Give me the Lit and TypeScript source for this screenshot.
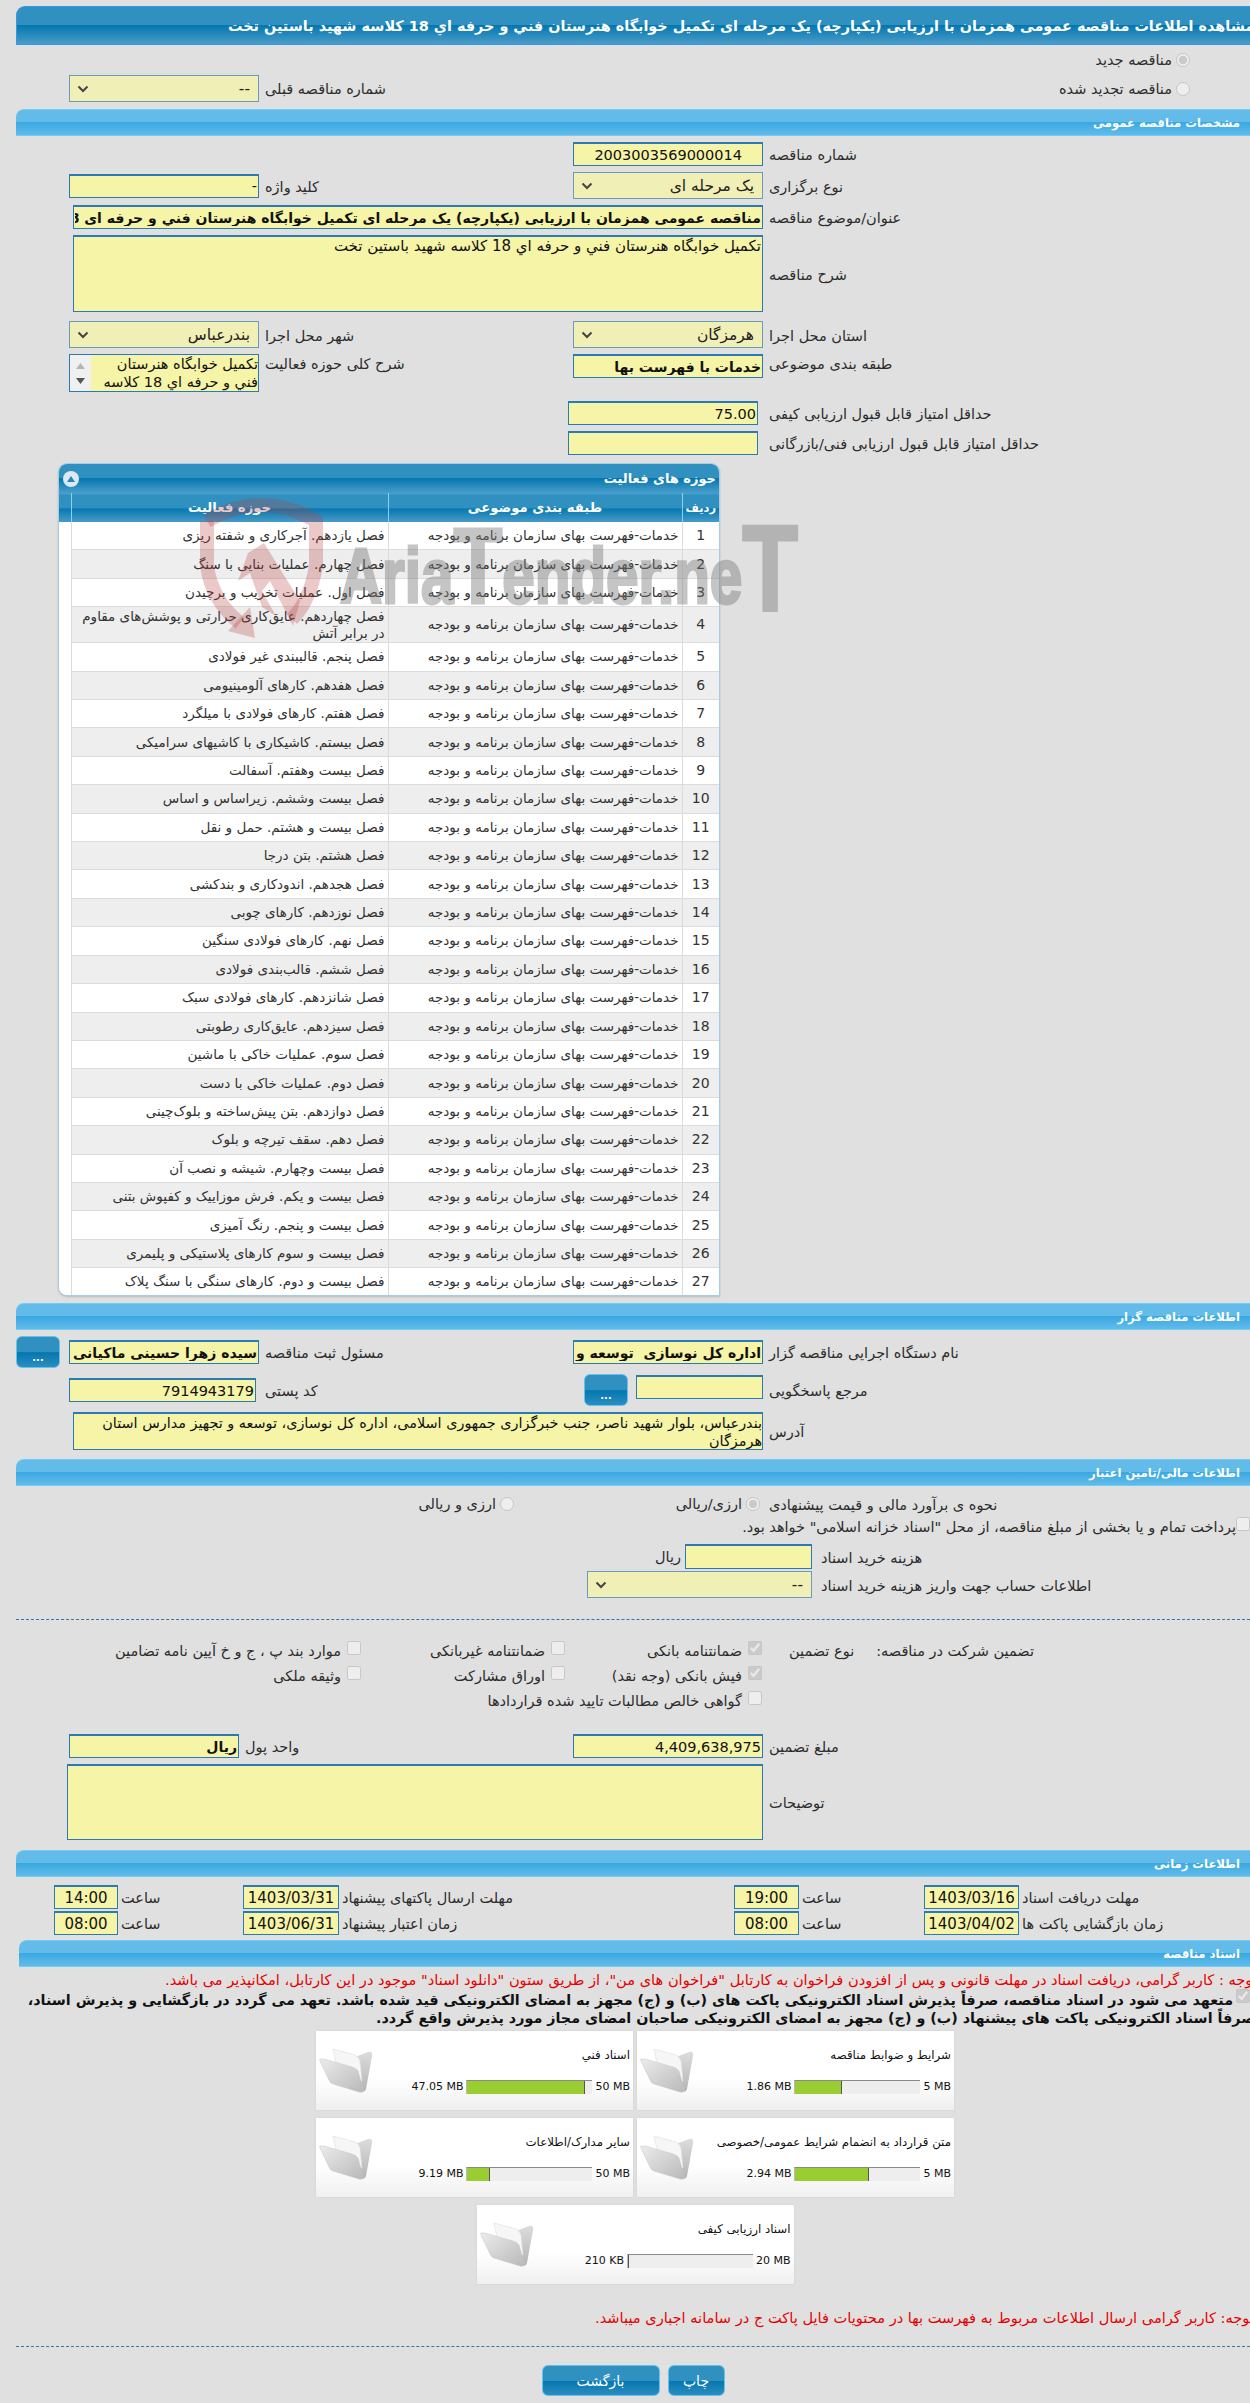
import { LitElement, html, css, svg } from "lit";
import { customElement } from "lit/decorators.js";

const B = "خدمات-فهرست بهای سازمان برنامه و بودجه";
const ROWS = [
  "فصل یازدهم. آجرکاری و شفته ریزی",
  "فصل چهارم. عملیات بنایی با سنگ",
  "فصل اول. عملیات تخریب و برچیدن",
  "فصل چهاردهم. عایق‌کاری حرارتی و پوشش‌های مقاوم در برابر آتش",
  "فصل پنجم. قالببندی غیر فولادی",
  "فصل هفدهم. کارهای آلومینیومی",
  "فصل هفتم. کارهای فولادی با میلگرد",
  "فصل بیستم. کاشیکاری با کاشیهای سرامیکی",
  "فصل بیست وهفتم. آسفالت",
  "فصل بیست وششم. زیراساس و اساس",
  "فصل بیست و هشتم. حمل و نقل",
  "فصل هشتم. بتن درجا",
  "فصل هجدهم. اندودکاری و بندکشی",
  "فصل نوزدهم. کارهای چوبی",
  "فصل نهم. کارهای فولادی سنگین",
  "فصل ششم. قالب‌بندی فولادی",
  "فصل شانزدهم. کارهای فولادی سبک",
  "فصل سیزدهم. عایق‌کاری رطوبتی",
  "فصل سوم. عملیات خاکی با ماشین",
  "فصل دوم. عملیات خاکی با دست",
  "فصل دوازدهم. بتن پیش‌ساخته و بلوک‌چینی",
  "فصل دهم. سقف تیرچه و بلوک",
  "فصل بیست وچهارم. شیشه و نصب آن",
  "فصل بیست و یکم. فرش موزاییک و کفپوش بتنی",
  "فصل بیست و پنجم. رنگ آمیزی",
  "فصل بیست و سوم کارهای پلاستیکی و پلیمری",
  "فصل بیست و دوم. کارهای سنگی با سنگ پلاک",
];

const CARDS = [
  { t: "شرایط و ضوابط مناقصه", used: "1.86 MB", max: "5 MB", pct: 37 },
  { t: "اسناد فني", used: "47.05 MB", max: "50 MB", pct: 94 },
  { t: "متن قرارداد به انضمام شرایط عمومی/خصوصی", used: "2.94 MB", max: "5 MB", pct: 59 },
  { t: "سایر مدارک/اطلاعات", used: "9.19 MB", max: "50 MB", pct: 18.4 },
  { t: "اسناد ارزیابی کیفی", used: "210 KB", max: "20 MB", pct: 1 },
];

const folder = svg`<svg class="folder" viewBox="0 0 54 47" width="54" height="47">
  <defs>
    <linearGradient id="fg" x1="0" y1="0" x2="1" y2="1"><stop offset="0" stop-color="#ececec"/><stop offset="1" stop-color="#b9b9b9"/></linearGradient>
    <linearGradient id="bg" x1="0" y1="0" x2="0" y2="1"><stop offset="0" stop-color="#dcdcdc"/><stop offset="1" stop-color="#b4b4b4"/></linearGradient>
  </defs>
  <path d="M36 10 L49 5 Q54 4 53 9 L47 42 Q46 46 42 44 Z" fill="url(#bg)"/>
  <path d="M14 2 L36 8 Q40 10 41 14 L43 34 L20 30 Z" fill="#f6f6f6" stroke="#dedede" stroke-width=".6"/>
  <path d="M2 12 Q0 11 1 14 L10 33 Q11 36 14 37 L40 45 Q45 46 44 42 L39 24 Q37 21 33 20 L5 12 Z" fill="url(#fg)" stroke="#c4c4c4" stroke-width=".5"/>
</svg>`;

const chevron = html`<svg class="chev" viewBox="0 0 12 8" width="12" height="8"><path d="M1.5 1.5 L6 6 L10.5 1.5" fill="none" stroke="#444" stroke-width="2"/></svg>`;

@customElement("app-root")
export class AppRoot extends LitElement {
  static styles = css`
    :host { display: block; width: 1250px; background: #e0e0e0; font-family: "DejaVu Sans", sans-serif; font-size: 14.5px; color: #2c2c2c; }
    * { box-sizing: border-box; }
    .page { width: 1250px; height: 2403px; overflow: hidden; padding: 6px 0 0 16px; direction: rtl; background: #e0e0e0; }

    .title { height: 39px; direction: ltr; display: flex; align-items: center; padding-left: 211px; overflow: hidden; color: #fff; font-weight: bold; font-size: 14.4px;
      border-top: 1px solid #3399e5; border-left: 1px solid #3399e5; border-bottom: 1px solid #3399e5; border-top-left-radius: 9px;
      background: linear-gradient(#3090bf 0, #3090bf 48%, #0477b0 50%, #4a9cc8 100%); }
    .title span { direction: rtl; white-space: nowrap; flex: none; }

    .sec { height: 27px; display: flex; align-items: center; padding-right: 10px; color: #fff; font-weight: bold; font-size: 11.6px;
      border-top: 1px solid #6dcdf7; border-bottom: 1px solid #6dcdf7; border-top-left-radius: 8px;
      background: linear-gradient(#62bbe9 0, #62bbe9 48%, #3aa9e2 50%, #62bbe9 100%); }
    .sec.docs { margin-left: 3px; }

    .row { display: grid; grid-template-columns: 487px 190px 314px 190px 53px; align-items: center; }
    .lbl { text-align: left; padding: 2px 0 0 6px; white-space: nowrap; direction: ltr; }
    .lbl > span { direction: rtl; unicode-bidi: isolate; }
    .lbl.top { align-self: start; }
    .lbl.pull { margin-left: -20px; }
    .topAlign { align-self: start; }

    input.tx, textarea.tx { display: block; width: 100%; height: 24px; margin: 0; padding: 0 1px; border: 1px solid #2a7ab4; border-top-width: 2px; border-radius: 0; background: #f6f4a6; color: #111; font: 14.5px "DejaVu Sans", sans-serif; direction: rtl; text-align: right; outline: none; }
    textarea.tx { font-size: 15px; resize: none; line-height: 18px; overflow: hidden; }
    input.tx.b { font-weight: bold; font-size: 14px; }
    input.tx.pad { padding-right: 20px; }
    .sel { display: flex; align-items: center; justify-content: space-between; height: 27px; width: 100%; padding: 0 8px 0 7px; background: #f0efb6; border: 1px solid #6a9bb8; font-size: 15.5px; color: #222; }
    .chev { flex: none; }
    .list { display: flex; height: 38px; border: 1px solid #2a7ab4; background: #f6f4a6; overflow: hidden; }
    .list .txt { flex: 1; font-size: 14.5px; line-height: 18px; color: #111; overflow: hidden; }
    .sb { flex: none; width: 21px; background: #f0f0f0; display: flex; flex-direction: column; align-items: center; justify-content: space-around; padding: 3px 0; }
    input.tx.w690, textarea.tx.w690 { grid-column: 2 / span 3; width: 690px; }
    textarea.tx.h77 { height: 77px; }
    textarea.tx.h38t { height: 38px; font-size: 14.4px; padding: 0; }
    .m3 { margin-top: 3px; } .m6 { margin-top: 6px; } .m7 { margin-top: 7px; } .m9 { margin-top: 9px; }
    input.tx.shift5 { margin-right: 5px; width: 190px; }

    .radioRow { padding-right: 60px; margin-top: 5px; height: 20px; display: flex; align-items: center; }
    .rad { display: inline-flex; align-items: center; gap: 4px; white-space: nowrap; }
    input[type=radio], input[type=checkbox] { margin: 0; width: 14px; height: 14px; flex: none; }
    .prev { display: grid; grid-template-columns: 991px 190px; align-items: center; height: 27px; margin-top: 5px; }
    .prevL { display: flex; justify-content: space-between; align-items: center; padding-right: 60px; padding-left: 6px; white-space: nowrap; }

    .panel { position: relative; width: 662px; margin: 8px 530px 0 0; height: 833px; }
    .panelBox { height: 833px; background: #fff; border: 1px solid #a5cde9; border-radius: 9px 9px 0 9px; box-shadow: 0 1px 2px #bbb; overflow: hidden; }
    .phead { height: 29px; display: flex; align-items: center; justify-content: space-between; padding: 0 3px 0 4px; color: #fff; font-weight: bold; font-size: 13px; background: linear-gradient(#3090bf 0, #3090bf 48%, #0477b0 50%, #4a9cc8 100%); }
    .toggle { width: 16px; height: 16px; border-radius: 50%; background: #dce8f2; display: flex; align-items: center; justify-content: center; }
    table { border-collapse: collapse; table-layout: fixed; width: 660px; font-size: 13.5px; }
    th { height: 28px; color: #fff; font-size: 13.2px; font-weight: bold; background: linear-gradient(#3090bf 0, #3090bf 48%, #0477b0 50%, #4a9cc8 100%); border-left: 1px solid #8ad0f5; border-top: 1px solid #3aa0d8; padding: 0; }
    th.rad1 { font-size: 11.5px; font-weight: bold; }
    th.blank, td.blank { border-left: none; }
    td { height: 28.42px; padding: 0 3px 0 6px; line-height: 17px; border-bottom: 1px solid #dcdcdc; border-left: 1px solid #dcdcdc; text-align: right; color: #333; }
    td.n { text-align: center; font-size: 14px; padding: 0; }
    td.blank { border-bottom: none; background: #fff; }
    tr:nth-child(even) td:not(.blank) { background: #eee; }
    tr.tall td { height: 36px; }
    .mark { position: absolute; left: 132px; top: 30px; pointer-events: none; }

    .sec.s2 { margin-top: 7px; }
    .sec.s3 { margin-top: 9px; }
    .btn { border: 1px solid #63c3ec; border-radius: 6px; color: #fff; padding: 0; font: 14px "DejaVu Sans", sans-serif; background: linear-gradient(#3090bf 0, #3090bf 50%, #0477b0 52%, #2c8dbf 100%); }
    .dots { width: 44px; height: 32px; font-weight: bold; font-size: 10px; padding-top: 10px; }
    .dotsEnd { justify-self: end; }
    .ref { display: flex; align-items: flex-start; gap: 8px; }
    .ref input { margin-top: 1px; }
    input.tx.w127 { width: 127px; flex: none; }
    input.tx.w187 { width: 187px; justify-self: end; }

    .fin { display: grid; grid-template-columns: 487px 190px 1fr; align-items: center; }
    .fin .r1 { padding-right: 3px; }
    .fin .r2 { padding-right: 59px; }
    .payRow { display: flex; align-items: flex-start; white-space: nowrap; height: 23px; margin-top: 4px; }
    .payRow span { padding-top: 2px; }
    .cost { display: grid; grid-template-columns: 438px 127px auto; align-items: center; height: 25px; margin-top: 4px; }
    .cost .lbl { padding-left: 9px; }
    .cost input.tx { height: 25px; }
    .cost .u { padding-right: 4px; }
    .acct { display: grid; grid-template-columns: 438px 225px; align-items: center; margin-top: 2px; }
    .acct .lbl { padding-left: 9px; }
    .rule { border-top: 1px dashed #2f7aa8; margin-top: 21px; }
    .guar { display: grid; grid-template-columns: 488px 197px 204px auto; grid-auto-rows: 25px; align-items: center; margin-top: 18px; }
    .guarHead { display: flex; justify-content: flex-end; gap: 22px; padding-left: 27px; white-space: nowrap; }
    .ck { display: flex; align-items: center; gap: 6px; white-space: nowrap; }
    .ck input { position: relative; top: -3px; }
    .amt { margin-top: 21px; }
    .amt2 { margin-top: 6px; }
    textarea.tx.tall2 { height: 76px; }
    textarea.tx.w696 { grid-column: 2 / span 3; width: 696px; }
    input.tx.w170 { width: 170px; justify-self: end; }

    .time { display: grid; grid-template-columns: 231px 95px 125px 65px 395px 96px 125px 64px; align-items: center; }
    .time .lbl { padding-left: 3px; }
    input.tx.d { font-size: 15px; text-align: center; padding: 0; }
    .t1 { margin-top: 8px; }
    .t2 { margin-top: 2px; }
    .sec.s4 { margin-top: 10px; }
    .sec.s5 { margin-top: 5px; }

    .note { color: #e60000; white-space: nowrap; font-size: 14.6px; }
    .n1 { margin-top: 3px; height: 20px; line-height: 20px; direction: ltr; display: flex; padding-left: 149px; }
    .n1 span, .n3 span { direction: rtl; flex: none; }
    .commit { display: flex; font-weight: bold; font-size: 14.3px; color: #111; white-space: nowrap; margin-top: 1px; line-height: 18px; }
    .commit input { margin: 0; position: relative; top: -2px; }
    .commit p { margin: 0; flex: 1; min-width: 0; padding-right: 3px; }
    .commit p span { display: block; height: 18px; }
    .commit p .l2 { margin-right: -22px; }
    .cards { width: 640px; margin: 4px 295px 0 0; display: flex; flex-wrap: wrap; justify-content: center; gap: 8px 4px; }
    .card { width: 317px; height: 79px; display: flex; align-items: center; gap: 4px; padding: 0 3px; background: linear-gradient(#fff 0, #fff 60%, #f0f0f0 100%); box-shadow: 0 0 2px #ccc; }
    .card .body { flex: 1; min-width: 0; display: flex; flex-direction: column; gap: 18px; }
    .card .name { font-size: 11.8px; color: #111; white-space: nowrap; height: 14px; line-height: 14px; }
    .prog { display: flex; align-items: center; gap: 3px; font-size: 11px; color: #111; direction: ltr; justify-content: flex-end; white-space: nowrap; }
    .bar { width: 126px; height: 14px; background: #eee; border-top: 1px solid #8a8a8a; border-left: 1px solid #bbb; flex: none; }
    .fill { height: 100%; background: #9acd32; border-right: 1px solid #555; }
    .folder { flex: none; order: 2; }
    .n3 { margin-top: 24px; height: 20px; line-height: 20px; direction: ltr; display: flex; padding-left: 579px; }
    .rule2 { border-top: 1px dashed #2f7aa8; margin-top: 18px; }
    .btns { display: flex; justify-content: center; gap: 8px; margin-top: 18px; }
    .btns .btn { height: 31px; }
    .bPrint { width: 57px; }
    .bBack { width: 118px; }
  `;

  tx(v = "", cls = "") { return html`<input class="tx ${cls}" type="text" readonly dir="rtl" .value=${v} />`; }
  lb(t: string, cls = "") { return html`<div class="lbl ${cls}"><span>${t}</span></div>`; }
  sel(t: string) { return html`<div class="sel"><span>${t}</span>${chevron}</div>`; }

  render() {
    return html`<div class="page" dir="rtl">
      <div class="title"><span>مشاهده اطلاعات مناقصه عمومی همزمان با ارزیابی (یکپارچه) یک مرحله ای تکمیل خوابگاه هنرستان فني و حرفه اي 18 کلاسه شهید باستین تخت</span></div>

      <div class="radioRow"><label class="rad"><input type="radio" name="a" checked disabled /><span>مناقصه جدید</span></label></div>
      <div class="prev">
        <div class="prevL"><label class="rad"><input type="radio" name="a" disabled /><span>مناقصه تجدید شده</span></label><span>شماره مناقصه قبلی</span></div>
        <div>${this.sel("--")}</div>
      </div>

      <div class="sec m7">مشخصات مناقصه عمومی</div>

      <div class="row m6">${this.lb("شماره مناقصه")}${this.tx("2003003569000014", "pad")}</div>
      <div class="row m6">${this.lb("نوع برگزاری")}${this.sel("یک مرحله ای")}${this.lb("کلید واژه")}${this.tx("-")}</div>
      <div class="row m6">${this.lb("عنوان/موضوع مناقصه")}${this.tx("مناقصه عمومی همزمان با ارزیابی (یکپارچه) یک مرحله ای تکمیل خوابگاه هنرستان فني و حرفه اي 18 کلاسه شهید باستین تخت", "b w690")}</div>
      <div class="row m6">${this.lb("شرح مناقصه")}<textarea class="tx w690 h77" readonly .value=${"تکمیل خوابگاه هنرستان فني و حرفه اي 18 کلاسه شهید باستین تخت"}></textarea></div>
      <div class="row m9">${this.lb("استان محل اجرا")}${this.sel("هرمزگان")}${this.lb("شهر محل اجرا")}${this.sel("بندرعباس")}</div>
      <div class="row m6">
        ${this.lb("طبقه بندی موضوعی", "top")}
        ${this.tx("خدمات با فهرست بها", "b topAlign")}
        ${this.lb("شرح کلی حوزه فعالیت", "top")}
        <div class="list"><div class="txt">تکمیل خوابگاه هنرستان فني و حرفه اي 18 کلاسه</div><div class="sb">
          <svg width="9" height="6" viewBox="0 0 9 6"><path d="M4.5 0 L9 6 H0Z" fill="#b5b5b5"/></svg>
          <svg width="9" height="6" viewBox="0 0 9 6"><path d="M4.5 6 L9 0 H0Z" fill="#555"/></svg>
        </div></div>
      </div>
      <div class="row m9">${this.lb("حداقل امتیاز قابل قبول ارزیابی کیفی")}${this.tx("75.00", "shift5")}</div>
      <div class="row m6">${this.lb("حداقل امتیاز قابل قبول ارزیابی فنی/بازرگانی")}${this.tx("", "shift5")}</div>

      <div class="panel">
        <div class="panelBox">
          <div class="phead"><span>حوزه های فعالیت</span><div class="toggle"><svg width="8" height="6" viewBox="0 0 8 6"><path d="M4 0 L8 6 H0Z" fill="#2a86b8"/></svg></div></div>
          <table>
            <colgroup><col width="37" /><col width="294" /><col width="317" /><col width="12" /></colgroup>
            <thead><tr><th class="rad1">ردیف</th><th>طبقه بندی موضوعی</th><th>حوزه فعالیت</th><th class="blank"></th></tr></thead>
            <tbody>
              ${ROWS.map((r, i) => html`<tr class="${i === 3 ? "tall" : ""}"><td class="n">${i + 1}</td><td>${B}</td><td>${r}</td><td class="blank"></td></tr>`)}
            </tbody>
          </table>
        </div>
        <svg class="mark" viewBox="190 492 620 155" width="620" height="155">
          <g fill="none" stroke="#b83c3c" stroke-opacity=".28" stroke-width="14">
            <path d="M207 520 Q262 488 316 520 L316 565 Q310 600 292 618" />
            <path d="M207 520 L207 565 Q212 600 240 622" />
          </g>
          <path d="M248 552 L264 542 L300 600 L293 625 L270 580 L262 590 L276 615 L262 606 L250 572 L238 580 Z" fill="#b83c3c" fill-opacity=".28" />
          <path d="M228 630 L255 637 L250 606 Z" fill="#b83c3c" fill-opacity=".28" />
          <g opacity=".42">
            <text x="340" y="602" fill="#777" stroke="#777" stroke-width="3" font-family="Liberation Sans" font-weight="bold" font-size="78" textLength="458" lengthAdjust="spacingAndGlyphs" style="direction:ltr;unicode-bidi:bidi-override">Aria<tspan font-size="107">T</tspan>ender.ne<tspan font-size="122" dy="8">T</tspan></text>
          </g>
        </svg>
      </div>

      <div class="sec s2">اطلاعات مناقصه گزار</div>
      <div class="row m6">${this.lb("نام دستگاه اجرایی مناقصه گزار")}${this.tx("اداره کل نوسازی  توسعه و تجهیز مدارس استان هرمزگان", "b")}${this.lb("مسئول ثبت مناقصه")}${this.tx("سیده زهرا حسینی ماکیانی", "b")}<button class="btn dots dotsEnd">...</button></div>
      <div class="row m6">${this.lb("مرجع پاسخگویی")}<div class="ref">${this.tx("", "w127")}<button class="btn dots">...</button></div>${this.lb("کد پستی")}${this.tx("7914943179", "w187")}</div>
      <div class="row m6">${this.lb("آدرس")}<textarea class="tx w690 h38t" readonly .value=${"بندرعباس، بلوار شهید ناصر، جنب خبرگزاری جمهوری اسلامی، اداره کل نوسازی، توسعه و تجهیز مدارس استان هرمزگان"}></textarea></div>

      <div class="sec s3">اطلاعات مالی/تامین اعتبار</div>
      <div class="fin m9">${this.lb("نحوه ی برآورد مالی و قیمت پیشنهادی")}<label class="rad r1"><input type="radio" name="b" checked disabled /><span>ارزی/ریالی</span></label><label class="rad r2"><input type="radio" name="b" disabled /><span>ارزی و ریالی</span></label></div>
      <div class="payRow"><input type="checkbox" disabled /><span>پرداخت تمام و یا بخشی از مبلغ مناقصه، از محل "اسناد خزانه اسلامی" خواهد بود.</span></div>
      <div class="cost">${this.lb("هزینه خرید اسناد")}${this.tx("")}<span class="u">ریال</span></div>
      <div class="acct">${this.lb("اطلاعات حساب جهت واریز هزینه خرید اسناد")}<div>${this.sel("--")}</div></div>
      <div class="rule"></div>
      <div class="guar">
        <div class="guarHead"><span>تضمین شرکت در مناقصه:</span><span>نوع تضمین</span></div>
        <label class="ck"><input type="checkbox" checked disabled /><span>ضمانتنامه بانکی</span></label>
        <label class="ck"><input type="checkbox" disabled /><span>ضمانتنامه غیربانکی</span></label>
        <label class="ck"><input type="checkbox" disabled /><span>موارد بند پ ، ج و خ آیین نامه تضامین</span></label>
        <div></div>
        <label class="ck"><input type="checkbox" checked disabled /><span>فیش بانکی (وجه نقد)</span></label>
        <label class="ck"><input type="checkbox" disabled /><span>اوراق مشارکت</span></label>
        <label class="ck"><input type="checkbox" disabled /><span>وثیقه ملکی</span></label>
        <div></div>
        <label class="ck"><input type="checkbox" disabled /><span>گواهی خالص مطالبات تایید شده قراردادها</span></label>
      </div>
      <div class="row amt">${this.lb("مبلغ تضمین")}${this.tx("4,409,638,975")}${this.lb("واحد پول", "pull")}${this.tx("ریال", "b w170")}</div>
      <div class="row amt2">${this.lb("توضیحات")}<textarea class="tx w696 tall2" readonly></textarea></div>

      <div class="sec s4">اطلاعات زمانی</div>
      <div class="time t1">${this.lb("مهلت دریافت اسناد")}${this.tx("1403/03/16", "d")}${this.lb("ساعت")}${this.tx("19:00", "d")}${this.lb("مهلت ارسال پاکتهای پیشنهاد")}${this.tx("1403/03/31", "d")}${this.lb("ساعت")}${this.tx("14:00", "d")}</div>
      <div class="time t2">${this.lb("زمان بازگشایی پاکت ها")}${this.tx("1403/04/02", "d")}${this.lb("ساعت")}${this.tx("08:00", "d")}${this.lb("زمان اعتبار پیشنهاد")}${this.tx("1403/06/31", "d")}${this.lb("ساعت")}${this.tx("08:00", "d")}</div>

      <div class="sec s5 docs">اسناد مناقصه</div>
      <div class="note n1"><span>توجه : کاربر گرامی، دریافت اسناد در مهلت قانونی و پس از افزودن فراخوان به کارتابل "فراخوان های من"، از طریق ستون "دانلود اسناد" موجود در این کارتابل، امکانپذیر می باشد.</span></div>
      <div class="commit"><input type="checkbox" checked disabled /><p><span>متعهد می شود در اسناد مناقصه، صرفاً پذیرش اسناد الکترونیکی پاکت های (ب) و (ج) مجهز به امضای الکترونیکی قید شده باشد. تعهد می گردد در بازگشایی و پذیرش اسناد،</span><span class="l2">صرفاً اسناد الکترونیکی پاکت های پیشنهاد (ب) و (ج) مجهز به امضای الکترونیکی صاحبان امضای مجاز مورد پذیرش واقع گردد.</span></p></div>
      <div class="cards">
        ${CARDS.map((c) => html`<div class="card"><div class="body"><div class="name">${c.t}</div><div class="prog"><span>${c.used}</span><div class="bar"><div class="fill" style="width:${c.pct}%"></div></div><span>${c.max}</span></div></div>${folder}</div>`)}
      </div>
      <div class="note n3"><span>توجه: کاربر گرامی ارسال اطلاعات مربوط به فهرست بها در محتویات فایل پاکت ج در سامانه اجباری میباشد.</span></div>
      <div class="rule2"></div>
      <div class="btns"><button class="btn bPrint">چاپ</button><button class="btn bBack">بازگشت</button></div>
    </div>`;
  }
}
